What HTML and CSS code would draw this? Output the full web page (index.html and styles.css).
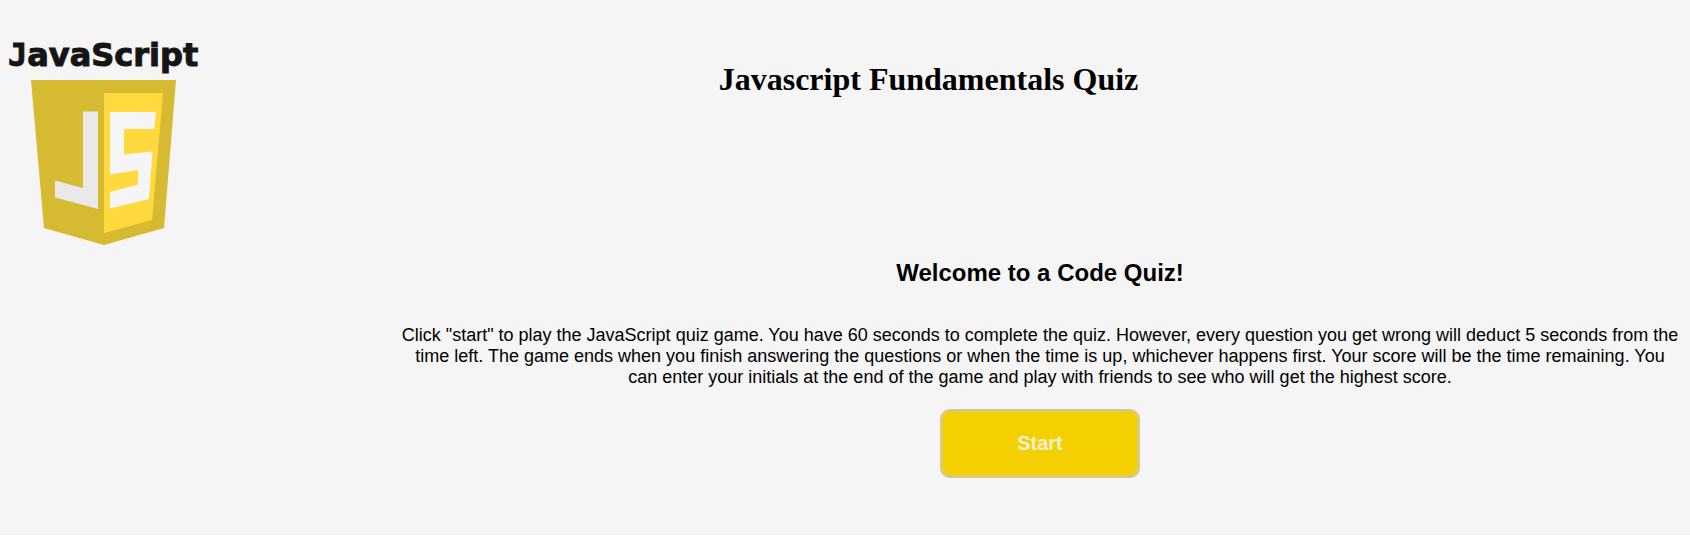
FILE: index.html
```html
<!DOCTYPE html>
<html lang="en">
<head>
<meta charset="utf-8">
<title>Javascript Fundamentals Quiz</title>
<link rel="stylesheet" href="styles.css">
</head>
<body>
<div class="page">
  <header class="header">
    <svg class="logo" viewBox="8 30 192 216" role="img" aria-label="JavaScript">
      <text class="logo-word" x="8" y="66"><tspan class="logo-initial">J</tspan>avaScript</text>
      <path fill="#d6ba32" d="M31 80H176L164 228L104 245L44 228Z"/>
      <path fill="#ffd93e" d="M104 93H163L152 220L104 233Z"/>
      <path fill="#e9e9e9" d="M83 111.500H98V209L55 197.500V180.500L83 188Z"/>
      <path fill="#f5f5f5" d="M110 112H156L154 129H124V154.500L152.500 151.500L149 199L110 208.500V192L138 184.500V170L110 174.500Z"/>
    </svg>
    <h1 class="title">Javascript Fundamentals Quiz</h1>
  </header>
  <main class="intro">
    <h2 class="welcome">Welcome to a Code Quiz!</h2>
    <p class="text">Click "start" to play the JavaScript quiz game. You have 60 seconds to complete the quiz. However, every question you get wrong will deduct 5 seconds from the time left. The game ends when you finish answering the questions or when the time is up, whichever happens first. Your score will be the time remaining. You can enter your initials at the end of the game and play with friends to see who will get the highest score.</p>
    <button class="start" type="button">Start</button>
  </main>
</div>
</body>
</html>
```
FILE: styles.css
```css
html { background: #fff; }
body {
  margin: 0;
  color: #000;
  font-family: "Liberation Sans", Arial, sans-serif;
}
.page {
  padding: 30px 8px 57px;
  background: #f5f5f5;
}
.header {
  display: flex;
  align-items: flex-start;
  padding-right: 25px;
}
.logo { width: 192px; flex: none; }
.logo-word {
  font: bold 32px "DejaVu Sans", sans-serif;
  fill: #151515;
  stroke: #151515;
  stroke-width: 1px;
}
.logo-initial { font-family: "DejaVu Sans Mono", monospace; }
.title {
  flex: 1;
  margin: 31px 0 0;
  font: bold 32px/37px "Liberation Serif", "Times New Roman", serif;
  text-align: center;
}
.intro {
  margin: 13px 0 0 390px;
  padding: 0 2px;
  text-align: center;
}
.welcome {
  margin: 0 0 38px;
  font-size: 24px;
  line-height: 28px;
}
.text {
  margin: 0 0 21px;
  font-size: 18px;
  line-height: 21px;
}
.start {
  display: block;
  width: 200px;
  height: 69px;
  margin: 0 auto;
  border: 3px solid #d8cb7c;
  border-radius: 10px;
  background: #f4d000;
  color: #f4f0d4;
  font: bold 20px "Liberation Sans", Arial, sans-serif;
}
```
